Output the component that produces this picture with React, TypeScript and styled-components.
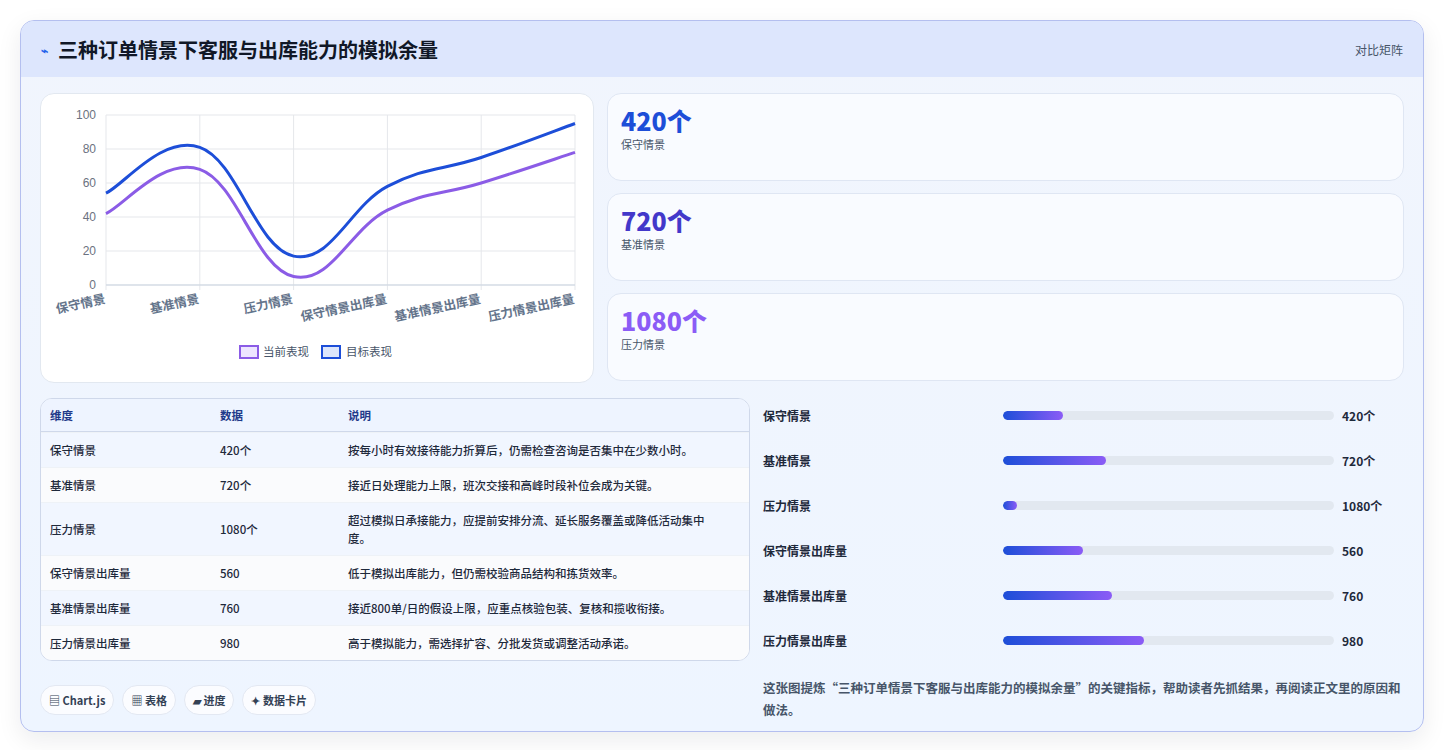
import React from "react";
import styled, { createGlobalStyle } from "styled-components";

const Global = createGlobalStyle`
  body { margin: 0; background: #fff; font-family: "Noto Sans CJK SC", "Noto Sans", sans-serif; color: #1e293b; }
`;

const Page = styled.div`
  padding: 20px;
  height: 750px;
  box-sizing: border-box;
`;

const Panel = styled.div`
  border: 1px solid #b4bfef;
  border-radius: 14px;
  overflow: hidden;
  height: 710px;
  background: linear-gradient(180deg, #f1f5fd 0%, #eef5ff 100%);
  box-shadow: 0 8px 24px rgba(15, 23, 42, 0.08);
  display: flex;
  flex-direction: column;
`;

const Header = styled.div`
  height: 56px;
  flex-shrink: 0;
  background: #dde6fd;
  display: flex;
  align-items: center;
  justify-content: space-between;
  padding: 0 20px;
`;

const Title = styled.h1`
  margin: 0;
  font-size: 20px;
  font-weight: 700;
  color: #111827;
  display: flex;
  align-items: center;
  gap: 10px;
`;

const Tag = styled.span`
  font-size: 12px;
  color: #475569;
`;

const Body = styled.div`
  padding: 16px 19px;
  display: flex;
  flex-direction: column;
  gap: 15px;
`;

const TopRow = styled.div`
  display: grid;
  grid-template-columns: 554px 1fr;
  gap: 13px;
`;

const ChartCard = styled.div`
  background: #fff;
  border: 1px solid #e2e8f0;
  border-radius: 14px;
  height: 288px;
`;

const Stats = styled.div`
  display: flex;
  flex-direction: column;
  gap: 12px;
`;

const StatCard = styled.div`
  background: #f9fbff;
  border: 1px solid #dfe6f3;
  border-radius: 14px;
  height: 88px;
  box-sizing: border-box;
  padding: 10px 13px;
`;

const StatValue = styled.div<{ $c: string }>`
  font-size: 25px;
  font-weight: 800;
  color: ${(p) => p.$c};
  line-height: 32px;
`;

const StatLabel = styled.div`
  font-size: 11px;
  color: #475569;
`;

const BottomRow = styled.div`
  display: grid;
  grid-template-columns: 710px 1fr;
  gap: 13px;
`;

const Table = styled.table`
  width: 100%;
  border-collapse: separate;
  border-spacing: 0;
  border: 1px solid #cfd8ea;
  border-radius: 12px;
  overflow: hidden;
  font-size: 11.5px;
  background: #fff;
  th {
    text-align: left;
    background: #eef4ff;
    color: #1e3a8a;
    font-weight: 700;
    height: 32px;
    padding: 0 9px;
    border-bottom: 1px solid #cfd8ea;
  }
  td {
    padding: 8px 9px;
    line-height: 18px;
    color: #1e293b;
    font-weight: 500;
    border-top: 1px solid #eef2f7;
  }
  tr:nth-child(odd) td { background: #f1f6ff; }
  tr:nth-child(even) td { background: #fafbfd; }
`;

const Desc = styled.td`
  padding-right: 28px !important;
`;

const Chips = styled.div`
  display: flex;
  gap: 8px;
  margin-top: 24px;
`;

const Chip = styled.span`
  background: #fbfcff;
  border: 1px solid #e3e8f2;
  border-radius: 16px;
  padding: 6px 8px;
  font-size: 11px;
  font-weight: 700;
  color: #334155;
`;

const Bars = styled.div`
  display: flex;
  flex-direction: column;
  margin-top: -5px;
`;

const BarRow = styled.div`
  display: grid;
  grid-template-columns: 232px 331px 1fr;
  gap: 8px;
  align-items: center;
  height: 45px;
  font-size: 12px;
  font-weight: 600;
`;

const Track = styled.div`
  height: 9px;
  border-radius: 5px;
  background: #e2e8f0;
  overflow: hidden;
`;

const Fill = styled.div`
  height: 100%;
  border-radius: 5px;
  background: linear-gradient(90deg, #1d4ed8, #8b5cf6);
`;

const Note = styled.p`
  margin: 14px 0 0;
  font-size: 12.5px;
  line-height: 22px;
  color: #475569;
  font-weight: 600;
`;

const cur = [42, 68, 5, 44, 60, 78];
const tgt = [54, 81, 17, 58, 75, 95];
const labels = ["保守情景", "基准情景", "压力情景", "保守情景出库量", "基准情景出库量", "压力情景出库量"];
const X0 = 65, X1 = 534, Y0 = 21, Y1 = 191;
const px = (i: number) => X0 + ((X1 - X0) / 5) * i;
const py = (v: number) => Y1 - ((Y1 - Y0) * v) / 100;

function smooth(vals: number[]) {
  const p = vals.map((v, i) => [px(i), py(v)]);
  let d = `M${p[0][0]},${p[0][1]}`;
  for (let i = 0; i < p.length - 1; i++) {
    const a = p[i - 1] || p[i], b = p[i], c = p[i + 1], e = p[i + 2] || c;
    const t = 0.2;
    d += ` C${b[0] + (c[0] - a[0]) * t},${b[1] + (c[1] - a[1]) * t} ${c[0] - (e[0] - b[0]) * t},${c[1] - (e[1] - b[1]) * t} ${c[0]},${c[1]}`;
  }
  return d;
}

const Chart = () => (
  <svg width="554" height="288" fontFamily="Liberation Sans, Noto Sans CJK SC, sans-serif">
    {[0, 20, 40, 60, 80, 100].map((v) => (
      <g key={v}>
        <line x1={X0} x2={X1} y1={py(v)} y2={py(v)} stroke="#e5e7eb" />
        <text x={X0 - 10} y={py(v) + 4} fontSize="12" fill="#6b7280" textAnchor="end">{v}</text>
      </g>
    ))}
    {labels.map((l, i) => (
      <g key={l}>
        <line x1={px(i)} x2={px(i)} y1={Y0} y2={Y1 + 5} stroke="#e5e7eb" />
        <text transform={`translate(${px(i)},${Y1 + 18}) rotate(-12)`} fontSize="12.5" fill="#64748b" fontWeight="600" textAnchor="end">{l}</text>
      </g>
    ))}
    <line x1={X0} x2={X1} y1={Y1} y2={Y1} stroke="#cbd5e1" />
    <path d={smooth(cur)} fill="none" stroke="#8b5ce6" strokeWidth="3" />
    <path d={smooth(tgt)} fill="none" stroke="#1d4ed8" strokeWidth="3" />
    <rect x="199" y="252" width="18" height="12" fill="#ede5ff" stroke="#8b5ce6" strokeWidth="2" />
    <text x="222" y="262" fontSize="11.5" fill="#475569">当前表现</text>
    <rect x="281" y="252" width="18" height="12" fill="#dde6fb" stroke="#1d4ed8" strokeWidth="2" />
    <text x="305" y="262" fontSize="11.5" fill="#475569">目标表现</text>
  </svg>
);

const rows = [
  ["保守情景", "420个", "按每小时有效接待能力折算后，仍需检查咨询是否集中在少数小时。"],
  ["基准情景", "720个", "接近日处理能力上限，班次交接和高峰时段补位会成为关键。"],
  ["压力情景", "1080个", "超过模拟日承接能力，应提前安排分流、延长服务覆盖或降低活动集中度。"],
  ["保守情景出库量", "560", "低于模拟出库能力，但仍需校验商品结构和拣货效率。"],
  ["基准情景出库量", "760", "接近800单/日的假设上限，应重点核验包装、复核和揽收衔接。"],
  ["压力情景出库量", "980", "高于模拟能力，需选择扩容、分批发货或调整活动承诺。"],
];

const bars: [string, string, number][] = [
  ["保守情景", "420个", 60],
  ["基准情景", "720个", 103],
  ["压力情景", "1080个", 14],
  ["保守情景出库量", "560", 80],
  ["基准情景出库量", "760", 109],
  ["压力情景出库量", "980", 141],
];

export default function App() {
  return (
    <Page>
      <Global />
      <Panel>
        <Header>
          <Title>
            <span style={{ color: "#2563eb", fontSize: 12 }}>⌁</span>三种订单情景下客服与出库能力的模拟余量
          </Title>
          <Tag>对比矩阵</Tag>
        </Header>
        <Body>
          <TopRow>
            <ChartCard>
              <Chart />
            </ChartCard>
            <Stats>
              <StatCard><StatValue $c="#1d4ed8">420个</StatValue><StatLabel>保守情景</StatLabel></StatCard>
              <StatCard><StatValue $c="#4338ca">720个</StatValue><StatLabel>基准情景</StatLabel></StatCard>
              <StatCard><StatValue $c="#8b5cf6">1080个</StatValue><StatLabel>压力情景</StatLabel></StatCard>
            </Stats>
          </TopRow>
          <BottomRow>
            <div>
              <Table>
                <colgroup>
                  <col style={{ width: 170 }} />
                  <col style={{ width: 128 }} />
                  <col />
                </colgroup>
                <thead>
                  <tr><th>维度</th><th>数据</th><th>说明</th></tr>
                </thead>
                <tbody>
                  {rows.map((r) => (
                    <tr key={r[0]}>
                      <td>{r[0]}</td><td>{r[1]}</td><Desc>{r[2]}</Desc>
                    </tr>
                  ))}
                </tbody>
              </Table>
              <Chips>
                <Chip>▤ Chart.js</Chip>
                <Chip>▦ 表格</Chip>
                <Chip>▰ 进度</Chip>
                <Chip>✦ 数据卡片</Chip>
              </Chips>
            </div>
            <div>
              <Bars>
                {bars.map(([l, v, w]) => (
                  <BarRow key={l}>
                    <span>{l}</span>
                    <Track><Fill style={{ width: w }} /></Track>
                    <span>{v}</span>
                  </BarRow>
                ))}
              </Bars>
              <Note>这张图提炼“三种订单情景下客服与出库能力的模拟余量”的关键指标，帮助读者先抓结果，再阅读正文里的原因和做法。</Note>
            </div>
          </BottomRow>
        </Body>
      </Panel>
    </Page>
  );
}
